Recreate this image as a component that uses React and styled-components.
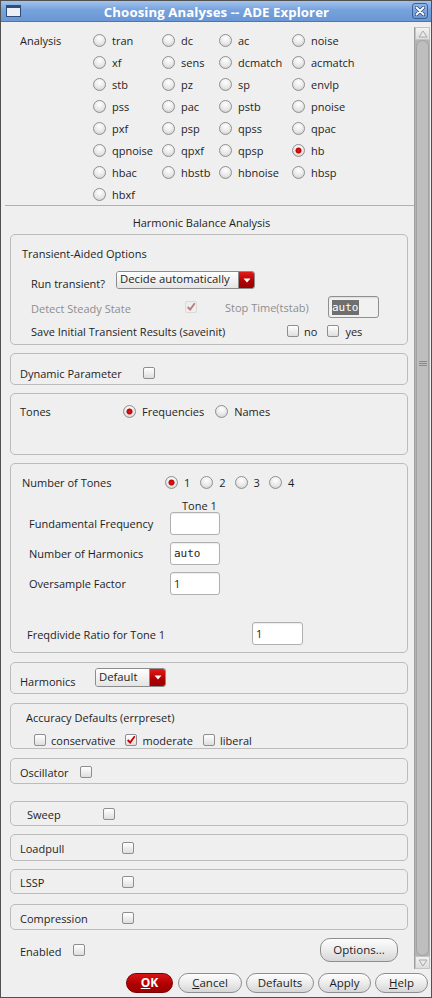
import React from 'react'
import styled, { createGlobalStyle } from 'styled-components'

const GlobalStyle = createGlobalStyle`
    html, body {
        margin: 0;
        padding: 0;
        background: #efefef;
    }
    * {
        box-sizing: border-box;
    }
`

const Window = styled.div`
    width: 432px;
    height: 998px;
    display: flex;
    flex-direction: column;
    background: #efefef;
    border: 1px solid #505050;
    font-family: "Open Sans", "Noto Sans", sans-serif;
    font-size: 11px;
    color: #1e1e1e;
`

const TitleBar = styled.div`
    height: 21px;
    display: flex;
    align-items: center;
    padding: 0 3px 0 5px;
    background: linear-gradient(#a3c3ec, #76a2dc 45%, #6a97d5);
    border-bottom: 1px solid #4f76aa;
`

const TitleText = styled.div`
    flex: 1;
    text-align: center;
    color: #fff;
    font-weight: bold;
    font-size: 13.2px;
    letter-spacing: 0.1px;
    padding-top: 1px;
`

const WinIcon = styled.div`
    width: 15px;
    height: 12px;
    border: 1px solid #2e4d78;
    border-top-width: 3px;
    background: #eceff3;
`

const CloseBtn = styled.div`
    width: 16px;
    height: 16px;
    border: 1px solid #3d6296;
    border-radius: 3px;
    background: linear-gradient(#8fb5e6, #6a96d2);
    display: flex;
    align-items: center;
    justify-content: center;
`

const Main = styled.div`
    flex: 1;
    display: flex;
    min-height: 0;
`

const Content = styled.div`
    flex: 1;
    display: flex;
    flex-direction: column;
`

const Scrollbar = styled.div`
    width: 16px;
    margin: 5px 1px 0 0;
    display: flex;
    flex-direction: column;
    background: #b4b4b4;
    border-left: 1px solid #9e9e9e;
`

const ScrollArrow = styled.div`
    height: 13px;
    background: linear-gradient(#f2f2f2, #dcdcdc);
    border: 1px solid #c4c4c4;
    display: flex;
    align-items: center;
    justify-content: center;
`

const ScrollThumb = styled.div`
    flex: 1;
    margin: 0 1px;
    background: #bebebe;
    border: 1px solid #a2a2a2;
    border-radius: 7px;
    display: flex;
    justify-content: center;
    padding-top: 320px;
`

const Grip = styled.div`
    width: 8px;
    height: 6px;
    background: repeating-linear-gradient(#8a8a8a 0, #8a8a8a 1px, transparent 1px, transparent 2px);
`

const AnalysisGrid = styled.div`
    display: grid;
    grid-template-columns: 73px 69px 57px 73px 1fr;
    grid-auto-rows: 22px;
    padding: 7px 0 0 19px;
`

const Cell = styled.div`
    display: flex;
    align-items: center;
    grid-column: ${p => p.$col || 'auto'};
`

const Separator = styled.div`
    height: 1px;
    margin: 0 0 0 4px;
    background: #b0b0b0;
`

const Heading = styled.div`
    height: 28px;
    padding: 4px 12px 0 0;
    display: flex;
    align-items: center;
    justify-content: center;
`

const GroupBox = styled.div`
    height: ${p => p.$h}px;
    margin: ${p => p.$mt || 0}px 6px 0 9px;
    border: 1px solid #bcbcbc;
    border-radius: 5px;
    padding-top: ${p => p.$pt || 0}px;
    display: flex;
    flex-direction: column;
`

const Row = styled.div`
    display: flex;
    align-items: ${p => p.$align || 'center'};
    height: ${p => p.$h || 20}px;
    margin-top: ${p => p.$mt || 0}px;
    padding-left: ${p => p.$pl || 0}px;
    padding-right: ${p => p.$pr || 0}px;
`

const Label = styled.span`
    display: inline-block;
    width: ${p => (p.$w ? `${p.$w}px` : 'auto')};
    flex: none;
    white-space: nowrap;
    color: ${p => (p.$disabled ? '#8e8e8e' : 'inherit')};
    padding-top: ${p => p.$pt || 0}px;
    margin-left: ${p => p.$ml || 0}px;
    margin-right: ${p => p.$mr || 0}px;
`

const Radio = styled.span`
    width: 13px;
    height: 13px;
    flex: none;
    border-radius: 50%;
    border: 1px solid #909090;
    margin-right: ${p => p.$mr ?? 6}px;
    background: ${p => (p.$on
        ? 'radial-gradient(circle, #f01818 0, #b80000 2.6px, rgba(180,0,0,0) 3.4px), radial-gradient(circle at 50% 30%, #ffffff, #e4e4e4 60%, #c8c8c8)'
        : 'radial-gradient(circle at 50% 30%, #ffffff, #e8e8e8 55%, #c6c6c6)')};
`

const Box = styled.span`
    width: 12px;
    height: 12px;
    flex: none;
    border-radius: 2px;
    border: 1px solid ${p => (p.$disabled ? '#dadada' : '#8e8e8e')};
    background: ${p => (p.$disabled ? '#eeeeee' : 'linear-gradient(#ffffff, #dedede)')};
    display: flex;
    align-items: center;
    justify-content: center;
    overflow: visible;
`

const Combo = styled.div`
    width: ${p => p.$w}px;
    height: ${p => p.$h || 18}px;
    flex: none;
    display: flex;
    border: 1px solid #8c8c8c;
    border-radius: 3px;
    overflow: hidden;
`

const ComboText = styled.div`
    flex: 1;
    padding: 0 0 3px 3px;
    display: flex;
    align-items: center;
    font-size: 11.3px;
    white-space: nowrap;
    background: linear-gradient(#ffffff, #e4e4e4);
    border-right: 1px solid #8c8c8c;
`

const ComboArrow = styled.div`
    width: 15px;
    flex: none;
    display: flex;
    align-items: center;
    justify-content: center;
    background: linear-gradient(#e41a1a, #b00000 60%, #9a0000);
`

const Field = styled.div`
    width: ${p => p.$w || 50}px;
    height: ${p => p.$h || 23}px;
    flex: none;
    margin-left: ${p => p.$ml || 0}px;
    background: ${p => (p.$disabled ? '#f1f1f1' : '#ffffff')};
    border: 1px solid ${p => (p.$disabled ? '#909090' : '#b0b0b0')};
    border-radius: 3px;
    box-shadow: inset 0 1px 1px rgba(0, 0, 0, 0.08);
    display: flex;
    align-items: center;
    padding-left: 3px;
    font-family: ${p => (p.$mono ? '"DejaVu Sans Mono", "Liberation Mono", monospace' : 'inherit')};
    font-size: 11px;
`

const Selected = styled.span`
    background: #6f6f6f;
    color: #ffffff;
    padding: 1px 0;
`

const ToneHead = styled.div`
    height: 14px;
    margin-top: 6px;
    padding-left: 171px;
    display: flex;
    align-items: center;
`

const Spacer = styled.div`
    flex: 1;
`

const PushButton = styled.div`
    width: ${p => p.$w}px;
    height: ${p => p.$h || 20}px;
    flex: none;
    display: flex;
    align-items: center;
    justify-content: center;
    border-radius: 10px;
    border: 1px solid ${p => (p.$primary ? '#7a0000' : '#8e8e8e')};
    background: ${p => (p.$primary
        ? 'linear-gradient(#d81616, #b00000 55%, #9c0000)'
        : 'linear-gradient(#fdfdfd, #ececec 50%, #d6d6d6)')};
    color: ${p => (p.$primary ? '#ffffff' : '#1e1e1e')};
    font-weight: ${p => (p.$primary ? 'bold' : 'normal')};
    font-size: ${p => (p.$primary ? '12px' : '11.5px')};
    margin-right: ${p => p.$mr || 0}px;
    padding-bottom: 1px;
`

const ButtonBar = styled.div`
    height: 28px;
    display: flex;
    align-items: center;
    justify-content: flex-end;
    gap: 4px;
    padding: 0 3px 1px 0;
`

function Check({ color = '#cc0000' }) {
    return (
        <svg width="12" height="12" viewBox="0 0 12 12">
            <path d="M2 6 L5 9 L10.5 1.5" fill="none" stroke={color} strokeWidth="2.2" strokeLinejoin="miter" />
        </svg>
    )
}

function CheckBox({ on, disabled }) {
    return (
        <Box $disabled={disabled}>
            {on && <Check color={disabled ? '#b87a7a' : '#cc0000'} />}
        </Box>
    )
}

function DropArrow() {
    return (
        <svg width="8" height="5" viewBox="0 0 8 5">
            <path d="M0.5 0.5 L7.5 0.5 L4 4.5 Z" fill="#ffffff" />
        </svg>
    )
}

function Mnemonic({ text }) {
    return (
        <span>
            <u>{text[0]}</u>{text.slice(1)}
        </span>
    )
}

const analyses = [
    'tran', 'dc', 'ac', 'noise',
    'xf', 'sens', 'dcmatch', 'acmatch',
    'stb', 'pz', 'sp', 'envlp',
    'pss', 'pac', 'pstb', 'pnoise',
    'pxf', 'psp', 'qpss', 'qpac',
    'qpnoise', 'qpxf', 'qpsp', 'hb',
    'hbac', 'hbstb', 'hbnoise', 'hbsp',
    'hbxf',
]

function AnalysisChooser() {
    const cells = []
    analyses.forEach((name, i) => {
        if (i % 4 === 0) {
            cells.push(<Cell key={'l' + i} $col={1}>{i === 0 ? 'Analysis' : ''}</Cell>)
        }
        cells.push(
            <Cell key={name}>
                <Radio $on={name === 'hb'} />
                <Label>{name}</Label>
            </Cell>
        )
    })
    return <AnalysisGrid>{cells}</AnalysisGrid>
}

function SimpleBox({ label, h, mt, pt, pl = 9, w }) {
    return (
        <GroupBox $h={h} $mt={mt} $pt={pt}>
            <Row $h={20} $pl={pl}>
                <Label $w={w}>{label}</Label>
                <CheckBox />
            </Row>
        </GroupBox>
    )
}

export default function App() {
    return (
        <>
            <GlobalStyle />
            <Window>
                <TitleBar>
                    <WinIcon />
                    <TitleText>Choosing Analyses -- ADE Explorer</TitleText>
                    <CloseBtn>
                        <svg width="10" height="10" viewBox="0 0 10 10">
                            <path d="M1.5 1.5 L8.5 8.5 M8.5 1.5 L1.5 8.5" stroke="#2c4f80" strokeWidth="3.4" strokeLinecap="round" />
                            <path d="M1.5 1.5 L8.5 8.5 M8.5 1.5 L1.5 8.5" stroke="#ffffff" strokeWidth="1.8" strokeLinecap="round" />
                        </svg>
                    </CloseBtn>
                </TitleBar>

                <Main>
                    <Content>
                        <AnalysisChooser />
                        <Separator />
                        <Heading>Harmonic Balance Analysis</Heading>

                        <GroupBox $h={111} $pt={8}>
                            <Row $h={20} $pl={11}>Transient-Aided Options</Row>
                            <Row $h={18} $mt={8} $pl={20} $align="flex-start">
                                <Label $w={85} $pt={5}>Run transient?</Label>
                                <Combo $w={139}>
                                    <ComboText>Decide automatically</ComboText>
                                    <ComboArrow><DropArrow /></ComboArrow>
                                </Combo>
                            </Row>
                            <Row $h={22} $mt={7} $pl={20}>
                                <Label $w={154} $disabled $pt={2}>Detect Steady State</Label>
                                <CheckBox on disabled />
                                <Label $w={103} $ml={28} $disabled>Stop Time(tstab)</Label>
                                <Field $w={51} $h={22} $mono $disabled><Selected>auto</Selected></Field>
                            </Row>
                            <Row $h={18} $mt={4} $pl={20}>
                                <Label $w={256}>Save Initial Transient Results (saveinit)</Label>
                                <CheckBox />
                                <Label $ml={5} $mr={10}>no</Label>
                                <CheckBox />
                                <Label $ml={6}>yes</Label>
                            </Row>
                        </GroupBox>

                        <GroupBox $h={32} $mt={8} $pt={8}>
                            <Row $h={22} $pl={9}>
                                <Label $w={123}>Dynamic Parameter</Label>
                                <CheckBox />
                            </Row>
                        </GroupBox>

                        <GroupBox $h={62} $mt={8} $pt={7}>
                            <Row $h={20} $pl={9}>
                                <Label $w={103}>Tones</Label>
                                <Radio $on />
                                <Label $mr={11}>Frequencies</Label>
                                <Radio />
                                <Label>Names</Label>
                            </Row>
                        </GroupBox>

                        <GroupBox $h={190} $mt={8} $pt={8}>
                            <Row $h={20} $pl={11}>
                                <Label $w={143}>Number of Tones</Label>
                                <Radio $on />
                                <Label $mr={10}>1</Label>
                                <Radio />
                                <Label $mr={9}>2</Label>
                                <Radio />
                                <Label $mr={9}>3</Label>
                                <Radio />
                                <Label>4</Label>
                            </Row>
                            <ToneHead>Tone 1</ToneHead>
                            <Row $h={23} $pl={18}>
                                <Label $w={141}>Fundamental Frequency</Label>
                                <Field />
                            </Row>
                            <Row $h={23} $mt={7} $pl={18}>
                                <Label $w={141}>Number of Harmonics</Label>
                                <Field $mono>auto</Field>
                            </Row>
                            <Row $h={23} $mt={7} $pl={18}>
                                <Label $w={141}>Oversample Factor</Label>
                                <Field>1</Field>
                            </Row>
                            <Row $h={23} $mt={27} $pl={16}>
                                <Label $w={225} $pt={2}>Freqdivide Ratio for Tone 1</Label>
                                <Field $w={51}>1</Field>
                            </Row>
                        </GroupBox>

                        <GroupBox $h={32} $mt={9} $pt={5}>
                            <Row $h={19} $pl={9} $align="flex-start">
                                <Label $w={75} $pt={6}>Harmonics</Label>
                                <Combo $w={71} $h={19}>
                                    <ComboText>Default</ComboText>
                                    <ComboArrow><DropArrow /></ComboArrow>
                                </Combo>
                            </Row>
                        </GroupBox>

                        <GroupBox $h={46} $mt={9} $pt={5}>
                            <Row $h={16} $pl={15}>Accuracy Defaults (errpreset)</Row>
                            <Row $h={16} $mt={7} $pl={23}>
                                <CheckBox />
                                <Label $ml={5} $mr={9}>conservative</Label>
                                <CheckBox on />
                                <Label $ml={6} $mr={10}>moderate</Label>
                                <CheckBox />
                                <Label $ml={5}>liberal</Label>
                            </Row>
                        </GroupBox>

                        <SimpleBox label="Oscillator" h={26} mt={9} pt={3} w={60} />
                        <SimpleBox label="Sweep" h={25} mt={17} pt={2} pl={16} w={76} />
                        <SimpleBox label="Loadpull" h={27} mt={8} pt={3} w={102} />
                        <SimpleBox label="LSSP" h={25} mt={8} pt={2} w={102} />
                        <SimpleBox label="Compression" h={26} mt={10} pt={3} w={102} />

                        <Row $h={24} $mt={8} $pl={19} $pr={16}>
                            <Label $w={53} $pt={2}>Enabled</Label>
                            <CheckBox />
                            <Spacer />
                            <PushButton $w={78} $h={24}>Options...</PushButton>
                        </Row>
                    </Content>

                    <Scrollbar>
                        <ScrollArrow>
                            <svg width="10" height="8" viewBox="0 0 10 8">
                                <path d="M1 7 L5 1 L9 7 Z" fill="#eaeaea" stroke="#a8a8a8" strokeWidth="1" />
                            </svg>
                        </ScrollArrow>
                        <ScrollThumb>
                            <Grip />
                        </ScrollThumb>
                        <ScrollArrow>
                            <svg width="10" height="8" viewBox="0 0 10 8">
                                <path d="M1 1 L5 7 L9 1 Z" fill="#eaeaea" stroke="#a8a8a8" strokeWidth="1" />
                            </svg>
                        </ScrollArrow>
                    </Scrollbar>
                </Main>

                <ButtonBar>
                    <PushButton $w={47} $primary $mr={1}><Mnemonic text="OK" /></PushButton>
                    <PushButton $w={64}><Mnemonic text="Cancel" /></PushButton>
                    <PushButton $w={68}>Defaults</PushButton>
                    <PushButton $w={53}>Apply</PushButton>
                    <PushButton $w={53}><Mnemonic text="Help" /></PushButton>
                </ButtonBar>
            </Window>
        </>
    )
}
